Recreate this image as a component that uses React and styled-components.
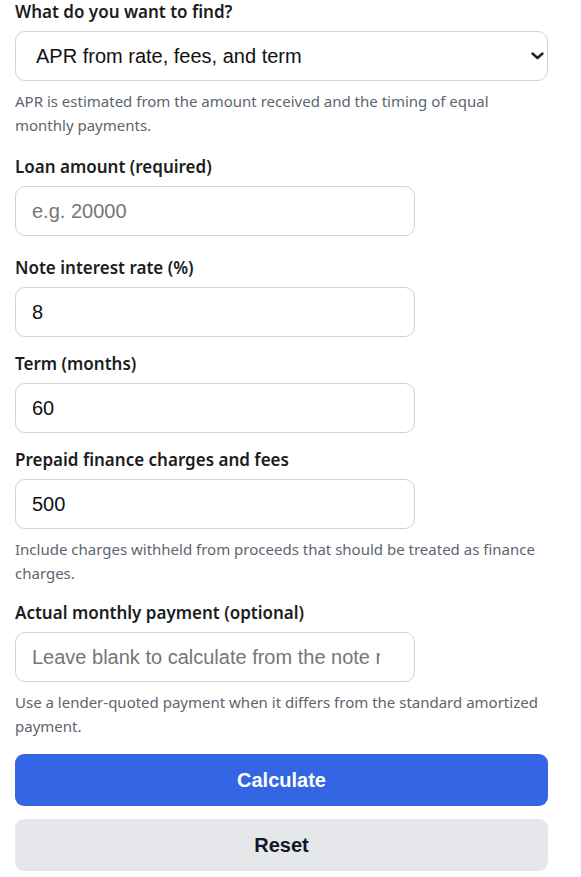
import React from "react";
import styled, { createGlobalStyle } from "styled-components";

const GlobalStyle = createGlobalStyle`
  * { box-sizing: border-box; }
  body {
    margin: 0;
    background: #ffffff;
    font-family: "Noto Sans", "Open Sans", sans-serif;
    color: #1f2328;
  }
`;

const Form = styled.form`
  display: flex;
  flex-direction: column;
  padding: 1px 33px 0 15px;
`;

const Field = styled.div`
  display: flex;
  flex-direction: column;
  margin-bottom: ${(p) => p.$gap ?? 16}px;
`;

const Label = styled.label`
  font-size: 17px;
  font-weight: 600;
  line-height: 22px;
  margin-bottom: 8px;
  color: #1a1d21;
`;

const SelectWrap = styled.div`
  position: relative;
  display: flex;
`;

const Select = styled.select`
  appearance: none;
  width: 100%;
  height: 50px;
  padding: 0 30px 0 20px;
  font-family: "Liberation Sans", Arial, sans-serif;
  font-size: 20px;
  color: #111;
  background: #fff;
  border: 1px solid #cdd3dc;
  border-radius: 10px;
  outline: none;
`;

const Chevron = styled.svg`
  position: absolute;
  right: 4px;
  top: 21px;
  width: 13px;
  height: 8px;
  pointer-events: none;
`;

const Input = styled.input`
  width: 400px;
  height: 50px;
  padding: 0 34px 0 16px;
  font-family: "Liberation Sans", Arial, sans-serif;
  font-size: 20px;
  color: #111;
  background: #fff;
  border: 1px solid #cdd3dc;
  border-radius: 10px;
  outline: none;

  &::placeholder {
    color: #767676;
  }
`;

const Help = styled.p`
  margin: 8px 0 3px;
  font-size: 15px;
  line-height: 24px;
  color: #5d6470;
`;

const Actions = styled.div`
  display: flex;
  flex-direction: column;
  gap: 13px;
  margin-top: -1px;
`;

const Button = styled.button`
  width: 100%;
  height: 52px;
  border: none;
  border-radius: 9px;
  font-family: "Liberation Sans", Arial, sans-serif;
  font-size: 20px;
  font-weight: 700;
  cursor: pointer;
  background: ${(p) => (p.$primary ? "#3465e4" : "#e5e7eb")};
  color: ${(p) => (p.$primary ? "#ffffff" : "#111827")};
`;

export default function App() {
  return (
    <>
      <GlobalStyle />
      <Form onSubmit={(e) => e.preventDefault()}>
        <Field>
          <Label htmlFor="mode">What do you want to find?</Label>
          <SelectWrap>
            <Select id="mode" defaultValue="apr">
              <option value="apr">APR from rate, fees, and term</option>
              <option value="rate">Note rate from APR</option>
            </Select>
            <Chevron viewBox="0 0 13 8" fill="none">
              <path d="M1.5 1.5 L6.5 6 L11.5 1.5" stroke="#222" strokeWidth="2.4" strokeLinecap="round" strokeLinejoin="round" />
            </Chevron>
          </SelectWrap>
          <Help>
            APR is estimated from the amount received and the timing of equal
            monthly payments.
          </Help>
        </Field>

        <Field $gap={21}>
          <Label htmlFor="amount">Loan amount (required)</Label>
          <Input id="amount" placeholder="e.g. 20000" />
        </Field>

        <Field>
          <Label htmlFor="rate">Note interest rate (%)</Label>
          <Input id="rate" defaultValue="8" />
        </Field>

        <Field>
          <Label htmlFor="term">Term (months)</Label>
          <Input id="term" defaultValue="60" />
        </Field>

        <Field $gap={14}>
          <Label htmlFor="fees">Prepaid finance charges and fees</Label>
          <Input id="fees" defaultValue="500" />
          <Help>
            Include charges withheld from proceeds that should be treated as
            finance charges.
          </Help>
        </Field>

        <Field $gap={14}>
          <Label htmlFor="payment">Actual monthly payment (optional)</Label>
          <Input
            id="payment"
            placeholder="Leave blank to calculate from the note rate"
          />
          <Help>
            Use a lender-quoted payment when it differs from the standard
            amortized payment.
          </Help>
        </Field>

        <Actions>
          <Button type="submit" $primary>Calculate</Button>
          <Button type="button">Reset</Button>
        </Actions>
      </Form>
    </>
  );
}
